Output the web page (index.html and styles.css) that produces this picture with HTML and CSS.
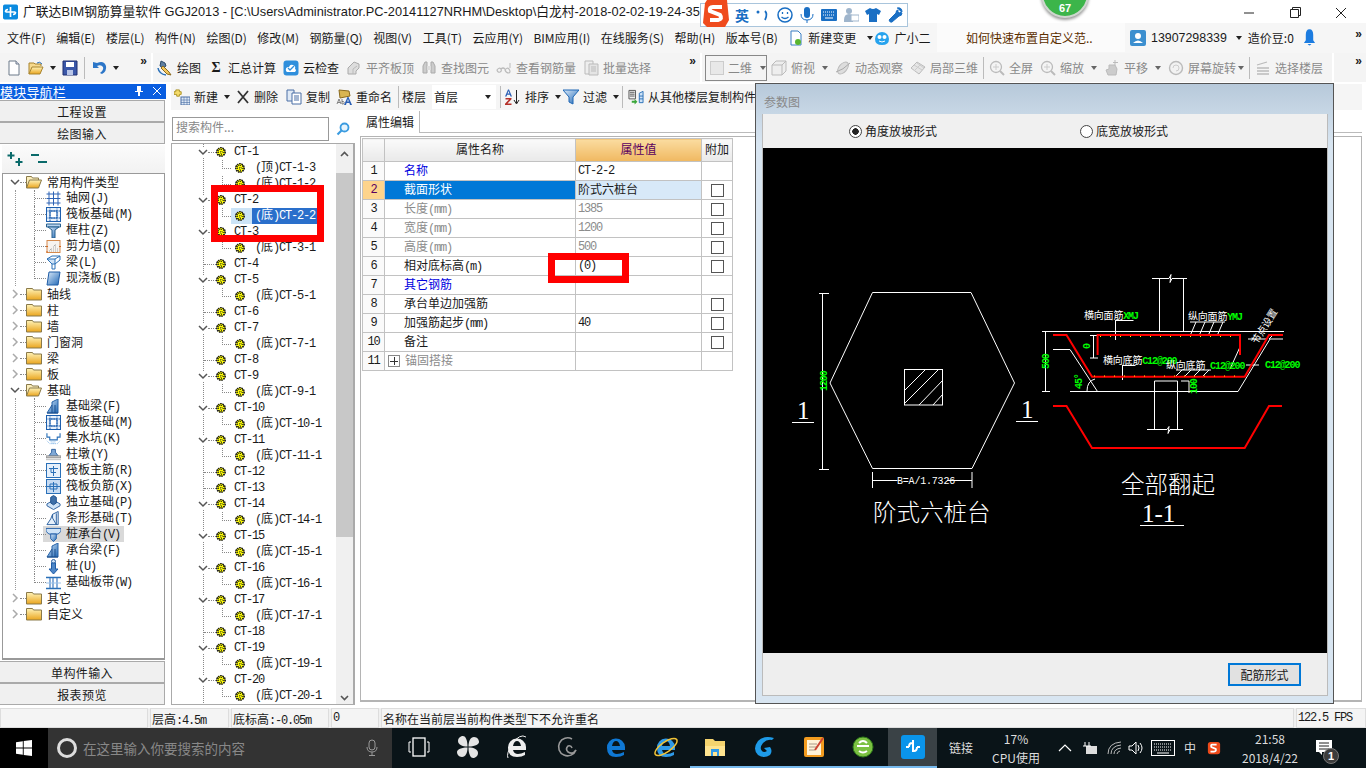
FILE: index.html
```html
<!DOCTYPE html>
<html lang="zh">
<head>
<meta charset="utf-8">
<title>广联达BIM钢筋算量软件 GGJ2013</title>
<link rel="stylesheet" href="styles.css">
</head>
<body>
<svg class="defs" aria-hidden="true">
<defs>
<linearGradient id="fy" x1="0" y1="0" x2="0" y2="1"><stop offset="0" stop-color="#fff3b8"/><stop offset="1" stop-color="#eaa51e"/></linearGradient>
<linearGradient id="bl" x1="0" y1="0" x2="1" y2="1"><stop offset="0" stop-color="#dcebfa"/><stop offset="1" stop-color="#1f67b5"/></linearGradient>
<symbol id="ct" viewBox="0 0 10 10"><circle cx="5" cy="5" r="4.200" fill="#ff0" stroke="#111" stroke-width="1.500" stroke-dasharray="1.500 .8"/><path d="M5 0v10M0 5h10M2.500 1v8M7.500 1v8M1 2.500h8M1 7.500h8" stroke="#222" stroke-width=".8" stroke-dasharray="1 1"/></symbol>
<symbol id="fc" viewBox="0 0 16 14"><path d="M.5 3V1.500h6l1 1.500h8v10H.5z" fill="url(#fy)" stroke="#8a7a4a"/></symbol>
<symbol id="fo" viewBox="0 0 16 14"><path d="M.5 13V1.500h5l1 1.500h6v2" fill="#fbeebc" stroke="#8a7a4a"/><path d="M.5 13l3-8h12l-3 8z" fill="url(#fy)" stroke="#8a7a4a"/></symbol>
<symbol id="grid" viewBox="0 0 15 15"><path d="M3 .5v14M7.500.5v14M12 .5v14M.5 3h14M.5 7.500h14M.5 12h14" stroke="#2d62b5" fill="none"/></symbol>
<symbol id="raft" viewBox="0 0 15 15"><rect x=".5" y=".5" width="14" height="14" fill="#e8f1fb" stroke="#1d5fae"/><rect x="4" y="4" width="7" height="7" fill="#fff" stroke="#1d5fae"/><path d="M0 4h15M0 11h15M4 0v15M11 0v15" stroke="#1d5fae" stroke-dasharray="1.500 1"/></symbol>
<symbol id="col" viewBox="0 0 15 15"><path d="M.5 1h14v3h-14z" fill="#b6d2ee" stroke="#27618f"/><path d="M2 4l4 3v8h3V7l4-3z" fill="url(#bl)" stroke="#27618f"/></symbol>
<symbol id="wall" viewBox="0 0 15 15"><rect x="1" y="1.500" width="13" height="12" fill="#f7f3ef" stroke="#d58a4e"/><path d="M3 12h9M5 10h7M7 8h4M9 6h2M4 10.500h1M8 6.500h1" stroke="#aaa" stroke-dasharray="1 1"/><path d="M0 7.500h2M13 7.500h2M0 13h2" stroke="#d2691e"/></symbol>
<symbol id="beam" viewBox="0 0 15 15"><path d="M1 4l5 5h3V4z" fill="#cfe3f7" stroke="#2a70b8"/><path d="M6 9v5h3V9M9 4l5-3v4l-5 4M1 4l5-3h8" fill="none" stroke="#2a70b8"/></symbol>
<symbol id="slab" viewBox="0 0 15 15"><path d="M3 1h11l-2 13H1z" fill="url(#bl)" stroke="#1f5ca6"/></symbol>
<symbol id="fb" viewBox="0 0 15 15"><path d="M1 14l5-8V3l6-3v14z" fill="url(#bl)" stroke="#2663a8"/><path d="M6 14V6M1 14h11M9 14V6" stroke="#1d4f8c" fill="none"/></symbol>
<symbol id="pit" viewBox="0 0 16 15"><path d="M1 2v4h3v3h8V6h3V2" fill="none" stroke="#2a70b8" stroke-width="1.200"/><path d="M1 10l3 3h8l3-3" fill="none" stroke="#7db3e6" stroke-dasharray="1 1"/><path d="M5 11h6M6 12.500h4" stroke="#7db3e6" stroke-dasharray="1 1"/></symbol>
<symbol id="pier" viewBox="0 0 16 15"><path d="M6 5V2h4v3l3 4H3z" fill="#7fa8d6" stroke="#2b5f9e"/><rect x="0" y="9" width="16" height="2" fill="#ddd" stroke="#888"/><path d="M0 13h16" stroke="#bbb"/></symbol>
<symbol id="pm" viewBox="0 0 15 15"><rect x=".5" y=".5" width="14" height="14" fill="#e6f0fb" stroke="#2a70b8"/><path d="M3 5.500h9M7.500 3v10M5 5.500v4h5" stroke="#2a70b8" fill="none"/></symbol>
<symbol id="pn" viewBox="0 0 15 15"><rect x=".5" y=".5" width="14" height="14" fill="#c8dcf3" stroke="#2a70b8"/><path d="M1 7.500h13M7.500 3v10M4 5h7v5H4z" stroke="#2a70b8" fill="none"/></symbol>
<symbol id="iso" viewBox="0 0 16 15"><path d="M1 9l7-4 7 4v2l-7 4-7-4z" fill="#cfe3f7" stroke="#2a5f9e"/><path d="M5 8V2l3-2 3 2v6l-3 2z" fill="#3d6fa8" stroke="#1d4f8c"/></symbol>
<symbol id="strip" viewBox="0 0 16 15"><path d="M1 14l4-6 2-5 6-3v14z" fill="#e6f0fb" stroke="#2a5f9e"/><path d="M7 3v4l4 7M11 2v12" stroke="#2a5f9e" fill="none"/></symbol>
<symbol id="cap" viewBox="0 0 16 15"><path d="M0 1h16v3l-3 3H3L0 4z" fill="#cfe3f7" stroke="#1f5ca6"/><path d="M5 7h6v5l-3 3-3-3z" fill="url(#bl)" stroke="#1f5ca6"/></symbol>
<symbol id="pile" viewBox="0 0 15 15"><circle cx="7.500" cy="2.500" r="2" fill="#cfe3f7" stroke="#2a5f9e"/><path d="M5.500 4h4v6h2.500l-4.500 5L3 10h2.500z" fill="#4d86c7" stroke="#1f5ca6"/></symbol>
<symbol id="band" viewBox="0 0 15 15"><path d="M0 2.500h15M0 13.500h15" stroke="#2a70b8" stroke-width="1.400"/><path d="M4 3v10M7 3v10M11 3v10" stroke="#4d86c7" stroke-width="1.300"/><path d="M0 8h15" stroke="#9cc3ea"/></symbol>
<symbol id="doc" viewBox="0 0 16 16"><path d="M3 1h7l3 3v11H3z" fill="#fff" stroke="#6c7a8a"/><path d="M10 1v3h3" fill="#dde" stroke="#6c7a8a"/></symbol>
<symbol id="open" viewBox="0 0 16 16"><path d="M1 14V3h5l1 1h6v2" fill="#f6d98d" stroke="#a8842f"/><path d="M1 14l3-7h11l-3 7z" fill="url(#fy)" stroke="#a8842f"/><path d="M9 3q3-2 5 1" fill="none" stroke="#2a70b8"/></symbol>
<symbol id="save" viewBox="0 0 16 16"><path d="M1 1h14v14H1z" fill="#3a57a8" stroke="#1f2f70"/><rect x="4" y="2" width="8" height="5" fill="#fff"/><rect x="5" y="10" width="6" height="5" fill="#b9c6e8"/></symbol>
<symbol id="undo" viewBox="0 0 16 16"><path d="M2 2v6h6L6 6q4-2 6 1 1 3-3 6l2 1q5-3 4-8-2-6-9-3z" fill="#2c76c8"/></symbol>
<symbol id="draw" viewBox="0 0 16 16"><path d="M4 1l4 2 1 3-3 2-3-2z" fill="#5f7f9f" stroke="#2c4a6a"/><path d="M6 6l6 6 2 3-4-1-6-6z" fill="#f3c65a" stroke="#8a6a1f"/><path d="M1 8q1 6 8 7" fill="none" stroke="#2a70b8" stroke-width="1.500"/></symbol>
<symbol id="cloud" viewBox="0 0 16 16"><rect x=".5" y=".5" width="15" height="15" rx="3" fill="#2f8fdc"/><path d="M3 11q-1-4 3-4 1-3 4-2 3 1 2 4 2 1 0 3H4z" fill="#fff"/><path d="M5 8l2 2 4-4" stroke="#2f8fdc" fill="none" stroke-width="1.300"/></symbol>
<symbol id="flat" viewBox="0 0 16 16"><path d="M2 14V8l6-6 5 2v4l-3 3v3z" fill="#ddd" stroke="#aaa"/><path d="M7 14V9l4-3" fill="none" stroke="#bbb"/></symbol>
<symbol id="bino" viewBox="0 0 16 16"><path d="M2 13V6l2-4h2v11zM14 13V6l-2-4h-2v11z" fill="#ccc" stroke="#aaa"/><path d="M6 6h4v4H6z" fill="#ddd"/></symbol>
<symbol id="view" viewBox="0 0 16 16"><path d="M1 10q2-3 4-1 1 2-1 3-2 1-3-2zM9 10q2-3 4-1 2 3 0 4-3 0-4-3zM5 9q2-2 4 0" fill="none" stroke="#bbb" stroke-width="1.200"/><path d="M14 3v5" stroke="#bbb"/></symbol>
<symbol id="batch" viewBox="0 0 16 16"><path d="M2 1h8v13H2z" fill="#eee" stroke="#bbb"/><path d="M6 4h9v11H6z" fill="#e4e4e4" stroke="#bbb"/><path d="M8 7h5M8 9h5M8 11h5" stroke="#bbb"/></symbol>
<symbol id="cube" viewBox="0 0 16 16"><path d="M1 5l4-4h10v10l-4 4H1z" fill="#eee" stroke="#bbb"/><path d="M1 5h10v10M11 5l4-4" fill="none" stroke="#bbb"/></symbol>
<symbol id="orbit" viewBox="0 0 16 16"><ellipse cx="8" cy="8" rx="4" ry="7" fill="#ddd" stroke="#bbb" transform="rotate(40 8 8)"/><path d="M1 12Q8 10 15 3" stroke="#aaa" fill="none"/></symbol>
<symbol id="part" viewBox="0 0 16 16"><path d="M1 8l6-6 8 5-6 7z" fill="#e6e6e6" stroke="#bbb"/><path d="M4 5l8 5M7 3l7 5M4 11l6-6" stroke="#ccc"/></symbol>
<symbol id="zoom" viewBox="0 0 16 16"><circle cx="7" cy="7" r="5.500" fill="#f4f4f4" stroke="#bbb" stroke-width="1.300"/><path d="M11 11l4 4" stroke="#bbb" stroke-width="2"/><path d="M7 4v6M4 7h6" stroke="#ccc"/></symbol>
<symbol id="pan" viewBox="0 0 16 16"><path d="M4 15l-2-5 3-1V5h6l2 4-1 6z" fill="#ccc" stroke="#bbb"/><path d="M11 0v5M9 2.500h5" stroke="#bbb"/></symbol>
<symbol id="rot" viewBox="0 0 16 16"><circle cx="8" cy="8" r="6.500" fill="#f2f2f2" stroke="#bbb" stroke-width="1.400"/><path d="M5 8a3 3 0 1 1 3 3" fill="none" stroke="#ccc"/></symbol>
<symbol id="lev" viewBox="0 0 16 16"><path d="M2 5l10-3M2 8h12M2 11h12M2 14h12" stroke="#bbb" stroke-width="1.300"/></symbol>
<symbol id="newc" viewBox="0 0 16 16"><path d="M2 1h4v2h2v3H6v2H3V6H0V3h2z" fill="#f5dc6b" stroke="#a98f20" transform="scale(.9)"/><rect x="7" y="8" width="9" height="8" fill="#dfe9f5" stroke="#4a6fa5"/><path d="M7 11h9M7 13.500h9M10 8v8M13 8v8" stroke="#4a6fa5" stroke-width=".6"/></symbol>
<symbol id="copy" viewBox="0 0 16 16"><path d="M1 1h7v11H1z" fill="#dfe9f5" stroke="#4a6fa5"/><path d="M6 4h9v11H6z" fill="#fff" stroke="#4a6fa5"/><path d="M8 7h5M8 9h5M8 11h5" stroke="#4a6fa5"/></symbol>
<symbol id="rename" viewBox="0 0 16 16"><path d="M3 1l10 1 1 5-10 2z" fill="#d9b552" stroke="#8a6a1f"/><path d="M1 15l2-5 2 5M1.800 13.500h2.400M6 10v5h1.500q1.500-1.300 0-2.500H6" fill="none" stroke="#666" stroke-width=".8"/><path d="M8 16l3.500-8h1L16 16h-2l-.6-2h-2.800l-.6 2zM11.200 12.500h1.600L12 10z" fill="#2a5fb5" fill-rule="evenodd"/></symbol>
<symbol id="az" viewBox="0 0 16 16"><path d="M0 7.500L3 .5h1l3 7H5.500l-.6-1.700H2.100L1.500 7.500zM2.600 4.500h1.800L3.500 2z" fill="#2a5fb5" fill-rule="evenodd"/><path d="M.5 9h6v1.200L2.500 14.500h4V16h-6.500v-1.200L4 10.500H.5z" fill="#b5302a"/><path d="M11.500 1v13M9 11l2.500 4 2.500-4" fill="none" stroke="#222"/></symbol>
<symbol id="filter" viewBox="0 0 16 16"><path d="M0 1h16L10 8v7L6 13V8z" fill="url(#bl)" stroke="#1f67b5"/></symbol>
<symbol id="fcopy" viewBox="0 0 17 16"><path d="M1 1h7v9H1z" fill="#eee" stroke="#555"/><path d="M2 3h5M2 5h5M2 7h5" stroke="#555"/><path d="M4 12h3v-2l3 3-3 3v-2H4z" fill="#3aa63a"/><path d="M12 4l4-2v12h-4z" fill="#cfe3f7" stroke="#2a70b8"/><path d="M12 7h4M12 10h4" stroke="#2a70b8"/></symbol>
<symbol id="ee" viewBox="0 0 24 24"><path fill-rule="evenodd" d="M3 13a9 9 0 0 1 18-1v3H8q1 4 5 4 3 0 7-2v3q-3 2-8 2-9 0-9-9zM8 11h8q-1-5-4-5t-4 5z"/></symbol>
</defs>
</svg>

<header class="titlebar">
  <svg class="applogo" viewBox="0 0 18 18"><rect width="18" height="18" rx="2" fill="#0b8be0"/><path d="M9 3v12M3 9h12M3 9q0-3 3-3M15 9q0 3-3 3" stroke="#fff" stroke-width="2" fill="none"/></svg>
  <span class="titletext">广联达BIM钢筋算量软件 GGJ2013 - [C:\Users\Administrator.PC-20141127NRHM\Desktop\白龙村-2018-02-02-19-24-35</span>
  <div class="winbtns">
    <svg class="winbtn" viewBox="0 0 46 23"><path d="M18 13h10" stroke="#222"/></svg>
    <svg class="winbtn" viewBox="0 0 46 23"><path d="M18.500 9.500h8v8h-8zM20.500 9.500v-2h8v8h-2" fill="none" stroke="#222"/></svg>
    <svg class="winbtn" viewBox="0 0 46 23"><path d="M18 8l10 10M28 8L18 18" stroke="#222"/></svg>
  </div>
</header>

<nav class="menubar">
  <div class="menus">
    <span>文件(F)</span><span>编辑(E)</span><span>楼层(L)</span><span>构件(N)</span><span>绘图(D)</span><span>修改(M)</span><span>钢筋量(Q)</span><span>视图(V)</span><span>工具(T)</span><span>云应用(Y)</span><span>BIM应用(I)</span><span>在线服务(S)</span><span>帮助(H)</span><span>版本号(B)</span>
    <span class="tool"><svg class="i" viewBox="0 0 16 16"><path d="M3 1h7l3 3v11H3z" fill="#fff" stroke="#3a7fc4"/><circle cx="10" cy="12" r="3" fill="#5ab52e"/></svg>新建变更</span><i class="arr mnarr"></i>
    <span class="tool mnnext"><svg class="i" viewBox="0 0 16 16"><path d="M1 9a7 7 0 0 1 14 0q0 6-7 6T1 9z" fill="#27a3ee"/><circle cx="5.500" cy="7" r="2" fill="#fff"/><circle cx="10.500" cy="7" r="2" fill="#fff"/><path d="M5 11q3 2 6 0" stroke="#fff" fill="none"/></svg>广小二</span>
  </div>
  <div class="newstab">如何快速布置自定义范..</div>
  <div class="account">
    <svg class="i" viewBox="0 0 16 16"><rect width="16" height="16" rx="2" fill="#3c8fcf"/><circle cx="8" cy="6" r="3" fill="#fff"/><path d="M3 13q5-5 10 0z" fill="#fff"/></svg>
    <span class="tel">13907298339</span><i class="arr"></i><span>造价豆:0</span>
    <svg class="bell" viewBox="0 0 14 20"><path d="M7 1q4 0 4 6v6l2 3H1l2-3V7q0-6 4-6z" fill="#1c7ce0"/><path d="M5 17h4q-2 3-4 0z" fill="#1c7ce0"/></svg>
    <b class="more">»</b>
  </div>
</nav>

<div class="toolbar">
  <div class="seg s1">
    <svg class="i"><use href="#doc"/></svg><svg class="i"><use href="#open"/></svg><i class="arr"></i><svg class="i"><use href="#save"/></svg><i class="sep"></i><svg class="i"><use href="#undo"/></svg><i class="arr"></i><b class="more">»</b>
  </div>
  <div class="seg s2">
    <span class="tool"><svg class="i"><use href="#draw"/></svg>绘图</span>
    <span class="tool"><b class="sigma">Σ</b>汇总计算</span>
    <span class="tool"><svg class="i"><use href="#cloud"/></svg>云检查</span>
    <span class="tool off"><svg class="i"><use href="#flat"/></svg>平齐板顶</span>
    <span class="tool off"><svg class="i"><use href="#bino"/></svg>查找图元</span>
    <span class="tool off"><svg class="i"><use href="#view"/></svg>查看钢筋量</span>
    <span class="tool off"><svg class="i"><use href="#batch"/></svg>批量选择</span>
    <b class="more">»</b>
  </div>
  <div class="seg s3">
    <span class="dimbox"><i class="sq"></i>二维<i class="arr"></i></span>
    <span class="tool off"><svg class="i"><use href="#cube"/></svg>俯视</span><i class="arr g"></i>
    <span class="tool off"><svg class="i"><use href="#orbit"/></svg>动态观察</span>
    <span class="tool off"><svg class="i"><use href="#part"/></svg>局部三维</span>
    <i class="sep tight"></i>
    <span class="tool off"><svg class="i"><use href="#zoom"/></svg>全屏</span>
    <span class="tool off"><svg class="i"><use href="#zoom"/></svg>缩放</span><i class="arr g"></i>
    <span class="tool off"><svg class="i"><use href="#pan"/></svg>平移</span><i class="arr g"></i>
    <span class="tool off"><svg class="i"><use href="#rot"/></svg>屏幕旋转</span><i class="arr g near"></i>
    <i class="sep tight"></i>
    <span class="tool off"><svg class="i"><use href="#lev"/></svg>选择楼层</span>
  </div>
  <div class="seg s4"><b class="more">»</b></div>
</div>

<main class="body">
  <aside class="nav">
    <div class="navhead"><span>模块导航栏</span><span class="navctl">
      <svg class="navico" viewBox="0 0 10 12"><path d="M3 1h4v5h2v1H6v4H4V7H1V6h2z" fill="#fff"/></svg>
      <svg class="navico" viewBox="0 0 10 12"><path d="M1 2l8 8M9 2l-8 8" stroke="#fff"/></svg></span></div>
    <div class="navbtn">工程设置</div>
    <div class="navbtn">绘图输入</div>
    <div class="expbar">
      <svg class="expico" viewBox="0 0 18 16"><path d="M4 1v7M.5 4.500h7M12 7v8M8.500 11h7" stroke="#0a6a6a" stroke-width="2"/></svg>
      <svg class="expico" viewBox="0 0 18 16"><path d="M1 4h8M8 11h9" stroke="#0a6a6a" stroke-width="2"/></svg>
    </div>
    <div class="navtree t">
      <div class="fr"><svg class="chev"><path d="M1 3l4 4 4-4" /></svg><i class="dash"></i><svg class="fold"><use href="#fo"/></svg><span><i>常用构件类型</i></span></div>
      <div class="kids">
        <div class="kr"><i class="elbow"></i><svg class="ki"><use href="#grid"/></svg><span><i>轴网</i>(J)</span></div>
        <div class="kr"><i class="elbow"></i><svg class="ki"><use href="#raft"/></svg><span><i>筏板基础</i>(M)</span></div>
        <div class="kr"><i class="elbow"></i><svg class="ki"><use href="#col"/></svg><span><i>框柱</i>(Z)</span></div>
        <div class="kr"><i class="elbow"></i><svg class="ki"><use href="#wall"/></svg><span><i>剪力墙</i>(Q)</span></div>
        <div class="kr"><i class="elbow"></i><svg class="ki"><use href="#beam"/></svg><span><i>梁</i>(L)</span></div>
        <div class="kr last"><i class="elbow"></i><svg class="ki"><use href="#slab"/></svg><span><i>现浇板</i>(B)</span></div>
      </div>
      <div class="fr"><svg class="chev closed"><path d="M3 1l4 4-4 4"/></svg><i class="dash"></i><svg class="fold"><use href="#fc"/></svg><span><i>轴线</i></span></div>
      <div class="fr"><svg class="chev closed"><path d="M3 1l4 4-4 4"/></svg><i class="dash"></i><svg class="fold"><use href="#fc"/></svg><span><i>柱</i></span></div>
      <div class="fr"><svg class="chev closed"><path d="M3 1l4 4-4 4"/></svg><i class="dash"></i><svg class="fold"><use href="#fc"/></svg><span><i>墙</i></span></div>
      <div class="fr"><svg class="chev closed"><path d="M3 1l4 4-4 4"/></svg><i class="dash"></i><svg class="fold"><use href="#fc"/></svg><span><i>门窗洞</i></span></div>
      <div class="fr"><svg class="chev closed"><path d="M3 1l4 4-4 4"/></svg><i class="dash"></i><svg class="fold"><use href="#fc"/></svg><span><i>梁</i></span></div>
      <div class="fr"><svg class="chev closed"><path d="M3 1l4 4-4 4"/></svg><i class="dash"></i><svg class="fold"><use href="#fc"/></svg><span><i>板</i></span></div>
      <div class="fr"><svg class="chev"><path d="M1 3l4 4 4-4"/></svg><i class="dash"></i><svg class="fold"><use href="#fo"/></svg><span><i>基础</i></span></div>
      <div class="kids">
        <div class="kr"><i class="elbow"></i><svg class="ki"><use href="#fb"/></svg><span><i>基础梁</i>(F)</span></div>
        <div class="kr"><i class="elbow"></i><svg class="ki"><use href="#raft"/></svg><span><i>筏板基础</i>(M)</span></div>
        <div class="kr"><i class="elbow"></i><svg class="ki"><use href="#pit"/></svg><span><i>集水坑</i>(K)</span></div>
        <div class="kr"><i class="elbow"></i><svg class="ki"><use href="#pier"/></svg><span><i>柱墩</i>(Y)</span></div>
        <div class="kr"><i class="elbow"></i><svg class="ki"><use href="#pm"/></svg><span><i>筏板主筋</i>(R)</span></div>
        <div class="kr"><i class="elbow"></i><svg class="ki"><use href="#pn"/></svg><span><i>筏板负筋</i>(X)</span></div>
        <div class="kr"><i class="elbow"></i><svg class="ki"><use href="#iso"/></svg><span><i>独立基础</i>(P)</span></div>
        <div class="kr"><i class="elbow"></i><svg class="ki"><use href="#strip"/></svg><span><i>条形基础</i>(T)</span></div>
        <div class="kr hot"><i class="elbow"></i><svg class="ki"><use href="#cap"/></svg><span><i>桩承台</i>(V)</span></div>
        <div class="kr"><i class="elbow"></i><svg class="ki"><use href="#fb"/></svg><span><i>承台梁</i>(F)</span></div>
        <div class="kr"><i class="elbow"></i><svg class="ki"><use href="#pile"/></svg><span><i>桩</i>(U)</span></div>
        <div class="kr last"><i class="elbow"></i><svg class="ki"><use href="#band"/></svg><span><i>基础板带</i>(W)</span></div>
      </div>
      <div class="fr"><svg class="chev closed"><path d="M3 1l4 4-4 4"/></svg><i class="dash"></i><svg class="fold"><use href="#fc"/></svg><span><i>其它</i></span></div>
      <div class="fr"><svg class="chev closed"><path d="M3 1l4 4-4 4"/></svg><i class="dash"></i><svg class="fold"><use href="#fc"/></svg><span><i>自定义</i></span></div>
    </div>
    <div class="navbtn">单构件输入</div>
    <div class="navbtn">报表预览</div>
  </aside>

  <section class="work">
    <div class="subbar">
      <span class="tool"><svg class="i"><use href="#newc"/></svg>新建</span><i class="arr"></i>
      <span class="tool"><svg class="i narrow" viewBox="0 0 14 14"><path d="M2 1l10 12M12 1L2 13" stroke="#333" stroke-width="1.800"/></svg>删除</span>
      <span class="tool sbcopy"><svg class="i"><use href="#copy"/></svg>复制</span>
      <span class="tool"><svg class="i"><use href="#rename"/></svg>重命名</span>
      <i class="sep"></i>
      <span class="sbfloor">楼层</span>
      <span class="floor"><span>首层</span><i class="arr"></i></span>
      <i class="sep sbsep"></i>
      <span class="tool sbaz"><svg class="i"><use href="#az"/></svg>排序</span><i class="arr"></i>
      <span class="tool sbfil"><svg class="i"><use href="#filter"/></svg>过滤</span><i class="arr"></i>
      <i class="sep sbsep2"></i>
      <span class="tool sbfc"><svg class="i"><use href="#fcopy"/></svg>从其他楼层复制构件</span>
    </div>
    <div class="panes">
      <div class="treepane">
        <div class="searchrow">
          <span class="search">搜索构件...</span>
          <svg class="lens" viewBox="0 0 14 14"><circle cx="8.500" cy="5.500" r="4" fill="#e6f4fd" stroke="#3a9be0" stroke-width="1.800"/><path d="M5.500 8.500L1.500 12.500" stroke="#3a9be0" stroke-width="2.200"/></svg>
        </div>
        <div class="treebox">
          <div class="ctlist t">
            <div class="cr"><svg class="chev"><path d="M1 3l4 4 4-4"/></svg><i class="dash"></i><svg class="ct"><use href="#ct"/></svg><span>CT-1</span></div>
            <div class="sr"><i class="el"></i><span class="ctw"><svg class="ct"><use href="#ct"/></svg></span><span class="lb">(<i>顶</i>)CT-1-3</span></div>
            <div class="sr"><i class="el"></i><span class="ctw"><svg class="ct"><use href="#ct"/></svg></span><span class="lb">(<i>底</i>)CT-1-2</span></div>
            <div class="cr"><svg class="chev"><path d="M1 3l4 4 4-4"/></svg><i class="dash"></i><svg class="ct"><use href="#ct"/></svg><span>CT-2</span></div>
            <div class="sr sel"><i class="el"></i><span class="ctw"><svg class="ct"><use href="#ct"/></svg></span><span class="lb">(<i>底</i>)CT-2-2</span></div>
            <div class="cr"><svg class="chev"><path d="M1 3l4 4 4-4"/></svg><i class="dash"></i><svg class="ct"><use href="#ct"/></svg><span>CT-3</span></div>
            <div class="sr"><i class="el"></i><span class="ctw"><svg class="ct"><use href="#ct"/></svg></span><span class="lb">(<i>底</i>)CT-3-1</span></div>
            <div class="cr leaf"><i class="dash"></i><svg class="ct"><use href="#ct"/></svg><span>CT-4</span></div>
            <div class="cr"><svg class="chev"><path d="M1 3l4 4 4-4"/></svg><i class="dash"></i><svg class="ct"><use href="#ct"/></svg><span>CT-5</span></div>
            <div class="sr"><i class="el"></i><span class="ctw"><svg class="ct"><use href="#ct"/></svg></span><span class="lb">(<i>底</i>)CT-5-1</span></div>
            <div class="cr leaf"><i class="dash"></i><svg class="ct"><use href="#ct"/></svg><span>CT-6</span></div>
            <div class="cr"><svg class="chev"><path d="M1 3l4 4 4-4"/></svg><i class="dash"></i><svg class="ct"><use href="#ct"/></svg><span>CT-7</span></div>
            <div class="sr"><i class="el"></i><span class="ctw"><svg class="ct"><use href="#ct"/></svg></span><span class="lb">(<i>底</i>)CT-7-1</span></div>
            <div class="cr leaf"><i class="dash"></i><svg class="ct"><use href="#ct"/></svg><span>CT-8</span></div>
            <div class="cr"><svg class="chev"><path d="M1 3l4 4 4-4"/></svg><i class="dash"></i><svg class="ct"><use href="#ct"/></svg><span>CT-9</span></div>
            <div class="sr"><i class="el"></i><span class="ctw"><svg class="ct"><use href="#ct"/></svg></span><span class="lb">(<i>底</i>)CT-9-1</span></div>
            <div class="cr"><svg class="chev"><path d="M1 3l4 4 4-4"/></svg><i class="dash"></i><svg class="ct"><use href="#ct"/></svg><span>CT-10</span></div>
            <div class="sr"><i class="el"></i><span class="ctw"><svg class="ct"><use href="#ct"/></svg></span><span class="lb">(<i>底</i>)CT-10-1</span></div>
            <div class="cr"><svg class="chev"><path d="M1 3l4 4 4-4"/></svg><i class="dash"></i><svg class="ct"><use href="#ct"/></svg><span>CT-11</span></div>
            <div class="sr"><i class="el"></i><span class="ctw"><svg class="ct"><use href="#ct"/></svg></span><span class="lb">(<i>底</i>)CT-11-1</span></div>
            <div class="cr leaf"><i class="dash"></i><svg class="ct"><use href="#ct"/></svg><span>CT-12</span></div>
            <div class="cr leaf"><i class="dash"></i><svg class="ct"><use href="#ct"/></svg><span>CT-13</span></div>
            <div class="cr"><svg class="chev"><path d="M1 3l4 4 4-4"/></svg><i class="dash"></i><svg class="ct"><use href="#ct"/></svg><span>CT-14</span></div>
            <div class="sr"><i class="el"></i><span class="ctw"><svg class="ct"><use href="#ct"/></svg></span><span class="lb">(<i>底</i>)CT-14-1</span></div>
            <div class="cr"><svg class="chev"><path d="M1 3l4 4 4-4"/></svg><i class="dash"></i><svg class="ct"><use href="#ct"/></svg><span>CT-15</span></div>
            <div class="sr"><i class="el"></i><span class="ctw"><svg class="ct"><use href="#ct"/></svg></span><span class="lb">(<i>底</i>)CT-15-1</span></div>
            <div class="cr"><svg class="chev"><path d="M1 3l4 4 4-4"/></svg><i class="dash"></i><svg class="ct"><use href="#ct"/></svg><span>CT-16</span></div>
            <div class="sr"><i class="el"></i><span class="ctw"><svg class="ct"><use href="#ct"/></svg></span><span class="lb">(<i>底</i>)CT-16-1</span></div>
            <div class="cr"><svg class="chev"><path d="M1 3l4 4 4-4"/></svg><i class="dash"></i><svg class="ct"><use href="#ct"/></svg><span>CT-17</span></div>
            <div class="sr"><i class="el"></i><span class="ctw"><svg class="ct"><use href="#ct"/></svg></span><span class="lb">(<i>底</i>)CT-17-1</span></div>
            <div class="cr leaf"><i class="dash"></i><svg class="ct"><use href="#ct"/></svg><span>CT-18</span></div>
            <div class="cr"><svg class="chev"><path d="M1 3l4 4 4-4"/></svg><i class="dash"></i><svg class="ct"><use href="#ct"/></svg><span>CT-19</span></div>
            <div class="sr"><i class="el"></i><span class="ctw"><svg class="ct"><use href="#ct"/></svg></span><span class="lb">(<i>底</i>)CT-19-1</span></div>
            <div class="cr"><svg class="chev"><path d="M1 3l4 4 4-4"/></svg><i class="dash"></i><svg class="ct"><use href="#ct"/></svg><span>CT-20</span></div>
            <div class="sr"><i class="el"></i><span class="ctw"><svg class="ct"><use href="#ct"/></svg></span><span class="lb">(<i>底</i>)CT-20-1</span></div>
          </div>
          <div class="vscroll">
            <svg class="sa" viewBox="0 0 17 29"><path d="M5 12l3.500-3.500L12 12" fill="none" stroke="#555" stroke-width="1.600"/></svg>
            <div class="thumb"></div>
            <div class="track"><svg class="sa2" viewBox="0 0 17 12"><path d="M5 4l3.500 3.500L12 4" fill="none" stroke="#555" stroke-width="1.600"/></svg></div>
          </div>
        </div>
      </div>
      <div class="props">
        <div class="tabs"><span class="tab">属性编辑</span></div>
        <div class="tablewrap">
          <table class="ptable t">
            <thead><tr><th class="cn"></th><th class="cname"><i>属性名称</i></th><th class="cval"><i>属性值</i></th><th class="cadd"><i>附加</i></th></tr></thead>
            <tbody>
              <tr><td class="cn">1</td><td class="nm link"><i>名称</i></td><td class="vl">CT-2-2</td><td></td></tr>
              <tr class="cur"><td class="cn">2</td><td class="nm"><i>截面形状</i></td><td class="vl"><i>阶式六桩台</i></td><td class="ck"><span class="box"></span></td></tr>
              <tr class="dim"><td class="cn">3</td><td class="nm"><i>长度</i>(mm)</td><td class="vl">1385</td><td class="ck"><span class="box"></span></td></tr>
              <tr class="dim"><td class="cn">4</td><td class="nm"><i>宽度</i>(mm)</td><td class="vl">1200</td><td class="ck"><span class="box"></span></td></tr>
              <tr class="dim"><td class="cn">5</td><td class="nm"><i>高度</i>(mm)</td><td class="vl">500</td><td class="ck"><span class="box"></span></td></tr>
              <tr><td class="cn">6</td><td class="nm"><i>相对底标高</i>(m)</td><td class="vl">(0)</td><td class="ck"><span class="box"></span></td></tr>
              <tr><td class="cn">7</td><td class="nm link"><i>其它钢筋</i></td><td class="vl"></td><td></td></tr>
              <tr><td class="cn">8</td><td class="nm"><i>承台单边加强筋</i></td><td class="vl"></td><td class="ck"><span class="box"></span></td></tr>
              <tr><td class="cn">9</td><td class="nm"><i>加强筋起步</i>(mm)</td><td class="vl">40</td><td class="ck"><span class="box"></span></td></tr>
              <tr><td class="cn">10</td><td class="nm"><i>备注</i></td><td class="vl"></td><td class="ck"><span class="box"></span></td></tr>
              <tr class="dim"><td class="cn">11</td><td class="nm plus"><span class="pbox"></span><i>锚固搭接</i></td><td class="vl"></td><td></td></tr>
            </tbody>
          </table>
        </div>
      </div>
    </div>
  </section>

  <div class="redbox rb1"></div>
  <div class="redbox rb2"></div>

  <div class="dialog">
    <div class="dlgtitle">参数图</div>
    <div class="dlgpanel">
      <div class="radios">
        <span class="radio on"><i class="dot"></i>角度放坡形式</span>
        <span class="radio"><i class="dot"></i>底宽放坡形式</span>
      </div>
      <svg class="cad" viewBox="763 148 564 505" xmlns="http://www.w3.org/2000/svg">
        <g fill="none" stroke="#fff">
          <path d="M830 383L872.500 292.500H971L1014.500 383 972 468.500H872.500z"/>
          <rect x="904.500" y="369.500" width="38" height="35.500"/>
          <path d="M904 391l22-22M904 404l35-35M919 405l24-25M933 405l10-11"/>
          <path d="M822.500 293v177M819 293.500h10M819 469.500h10M872.500 472v16M972 472v16M872.500 480.500h25M947 480.500h25"/>
          <path d="M792 422.500h22M1016 421.500h22"/>
          <path d="M1042 331.500h242M1159.500 331V278.500M1183.500 331V278.500M1152 278.500h17l2-4-1 8 2-4h15"/>
          <path d="M1053 349.500h17l27.500 42M1070 391.500h168l32-52.500h13M1042 391.500h8M1045.500 331v60M1093.500 335v23M1090 335.500h8M1090 358h8"/>
          <path d="M1154.500 381v48M1177.500 381v48M1154.500 381h23M1147 429.500h20l2-3-1 7 2-4h13M1181 381h8M1189 381v12"/>
          <path d="M1115.500 320.500h18M1115.500 320v20M1190 322h35M1190 336l6-14M1199 336l6-14M1208 336l6-14M1217 336l6-14"/>
          <path d="M1122.500 365.500h13M1122.500 365v15M1176 370h35M1176 376l6-6M1185 376l6-6M1194 376l6-6M1203 376l6-6M1230 369l10-22M1246 365h13M1248 339h18M1269 339l4-4"/>
          <path d="M1087 391q0-10 8-12"/>
          <path d="M1140 525.500h44"/>
        </g>
        <g fill="none" stroke="#f00" stroke-width="2">
          <path d="M1053 335h13.500L1092 376.700h152.700L1269 335h14"/>
          <path d="M1097.600 355v-20H1240v20"/>
          <path d="M1053 406h13.500L1092 448h152.700L1269 406h13"/>
        </g>
        <path d="M1100 336.500h138M1094 376h148" stroke="#ff0" stroke-dasharray="1 9" fill="none"/>
        <g class="cadsm">
          <text x="1084" y="319">横向面筋<tspan class="gn">XMJ</tspan></text>
          <text x="1188" y="320">纵向面筋<tspan class="gn">YMJ</tspan></text>
          <text x="1103" y="364">横向底筋<tspan class="gn">C12@200</tspan></text>
          <text x="1166" y="369">纵向底筋<tspan class="gn"> C12@200</tspan></text>
          <text class="gn" x="1265" y="368">C12@200</text>
          <text x="897" y="484">B=A/1.7326</text>
          <text transform="translate(1257 345) rotate(-58)">节点设置</text>
          <text class="gn" transform="translate(1049 369) rotate(-90)">500</text>
          <text class="gn" transform="translate(827 391) rotate(-90)">1200</text>
          <text class="gn" transform="translate(1090 349) rotate(-90)">0</text>
          <text class="gn" transform="translate(1197 394) rotate(-90)">100</text>
          <text class="gn" transform="translate(1082 389) rotate(-90)">45°</text>
        </g>
        <g class="cadlg">
          <text x="797" y="419">1</text>
          <text x="1021" y="418">1</text>
          <text class="bigcn" x="873" y="521">阶式六桩台</text>
          <text class="bigcn" x="1121" y="493">全部翻起</text>
          <text x="1142" y="522">1-1</text>
        </g>
      </svg>
      <div class="dlgfoot"><span class="okbtn">配筋形式</span></div>
    </div>
  </div>
</main>

<footer class="status t">
  <span class="sc c1"></span><span class="sc c2"><i>层高</i>:4.5m</span><span class="sc c3"><i>底标高</i>:-0.05m</span><span class="sc c4">0</span><span class="sc c5"><i>名称在当前层当前构件类型下不允许重名</i></span><span class="sc c6">122.5 FPS</span>
</footer>

<div class="taskbar">
  <div class="startbtn"><svg class="winlogo" viewBox="0 0 16 16"><path d="M0 2.200l6.800-1v6.300H0zM7.700 1L16 0v7.500H7.700zM0 8.400h6.800v6.400L0 13.800zM7.700 8.400H16V16l-8.300-1.100z" fill="#fff"/></svg></div>
  <div class="tasksearch">
    <i class="cortana"></i><span class="hint">在这里输入你要搜索的内容</span>
    <svg class="mic" viewBox="0 0 12 18"><rect x="3" y="1" width="6" height="10" rx="3" fill="none" stroke="#999"/><path d="M1 8q0 5 5 5t5-5M6 13v3M3 16.500h6" fill="none" stroke="#999"/></svg>
  </div>
  <div class="taskicons">
    <span class="ti"><svg viewBox="0 0 24 24"><rect x="6" y="3" width="12" height="18" fill="none" stroke="#fff" stroke-width="1.300"/><path d="M4 7H2v10h2M20 7h2v10h-2" fill="none" stroke="#fff"/></svg></span>
    <span class="ti"><svg viewBox="0 0 24 24"><g fill="#e4e4e4"><path d="M11.500 11.500C6 11.500 2 9.500 2 6S5 1 7 1s4.500 3 4.500 10.500z"/><path d="M12.500 11.500C12.500 6 14.500 2 18 2s5 3 5 5-3 4.500-10.500 4.500z"/><path d="M12.500 12.500C18 12.500 22 14.500 22 18s-3 5-5 5-4.500-3-4.500-10.500z"/><path d="M11.500 12.500C11.500 18 9.500 22 6 22s-5-3-5-5 3-4.500 10.500-4.500z"/></g></svg></span>
    <span class="ti"><svg class="ic-w" viewBox="0 0 24 24"><use href="#ee"/><path d="M3 23Q1 19 7 9 15-2 21 2" fill="none" stroke="#eee"/></svg></span>
    <span class="ti"><svg viewBox="0 0 24 24"><path d="M17 4a9 9 0 1 0 4 11q-3 5-8 2-3-3 0-6 3-1 4 2" fill="none" stroke="#999" stroke-width="1.600"/></svg></span>
    <span class="ti"><svg class="ic-e" viewBox="0 0 24 24"><use href="#ee"/></svg></span>
    <span class="ti"><svg class="ic-i" viewBox="0 0 24 24"><use href="#ee"/><ellipse cx="12" cy="12" rx="13" ry="5" fill="none" stroke="#f2c438" stroke-width="1.500" transform="rotate(-35 12 12)"/></svg></span>
    <span class="ti run"><svg viewBox="0 0 24 24"><path d="M2 4h8l2 2h10v15H2z" fill="#f5d46e"/><path d="M2 11h20v10H2z" fill="#ffe48f"/><path d="M8 14h8v7h-2v-4h-4v4H8z" fill="#2f9ae8"/></svg></span>
    <span class="ti run"><svg viewBox="0 0 24 24"><path d="M22 3q-10-3-16 3Q0 14 6 20q6 4 12 0 3-4 0-8l-6 1 3 3q-3 2-5 0-3-3 1-8 4-4 9-3z" fill="#1e9be8"/></svg></span>
    <span class="ti run"><svg viewBox="0 0 24 24"><rect x="2" y="2" width="20" height="20" rx="2" fill="#f39c1f"/><rect x="5" y="5" width="14" height="15" fill="#fff3d8"/><path d="M7 9h8M7 12h8M7 15h6" stroke="#a98" fill="none"/><path d="M21 3L13 15" stroke="#c43" stroke-width="2"/></svg></span>
    <span class="ti run"><svg viewBox="0 0 24 24"><circle cx="12" cy="12" r="10" fill="#7bc142" stroke="#2e7a1a"/><path d="M6 11h12M16 8q-4-4-8 0M8 16q4 3 8 0" stroke="#fff" stroke-width="2" fill="none"/></svg></span>
    <span class="ti active"><svg viewBox="0 0 24 24"><rect width="24" height="24" rx="3" fill="#0a94ea"/><path d="M12 5v12M5 12h3M16 12h3M8 12q0-4 3-4M16 12q0 4-3 4" stroke="#fff" stroke-width="2" fill="none"/></svg></span>
  </div>
  <div class="tray">
    <span class="trlink">链接</span>
    <span class="cpu"><span>17%</span><span>CPU使用</span></span>
    <svg class="tr a" viewBox="0 0 14 14"><path d="M1 10l6-6 6 6" fill="none" stroke="#fff" stroke-width="1.200"/></svg>
    <svg class="tr" viewBox="0 0 16 14"><rect x="4" y="5" width="11" height="8" fill="#ddd"/><path d="M3 1v4M7 1v4M1 5h8" stroke="#fff"/></svg>
    <svg class="tr" viewBox="0 0 16 14"><path d="M1 13q0-11 13-12M4 13q0-8 10-9M7 13q0-5 7-6M10 13q0-2 3-3" fill="none" stroke="#bbb"/></svg>
    <svg class="tr nar" viewBox="0 0 16 14"><path d="M1 5h3l4-4v12L4 9H1z" fill="none" stroke="#fff"/><path d="M10 4q2 3 0 6M12 2q4 5 0 10" fill="none" stroke="#fff"/></svg>
    <svg class="tr kb" viewBox="0 0 24 16"><rect x=".5" y=".5" width="23" height="15" fill="none" stroke="#fff"/><path d="M3 4h18M3 7h18M3 10h18" stroke="#fff" stroke-dasharray="1 1"/><path d="M6 13h12" stroke="#fff"/></svg>
    <span class="zh">中</span>
    <svg class="tr" viewBox="0 0 16 16"><rect x="1" y="1" width="14" height="14" rx="3" fill="#ee4a1a"/><path d="M11 4H6q-2 0-1 3l5 2q1 3-2 3H4" fill="none" stroke="#fff" stroke-width="2"/></svg>
    <span class="clock"><span>21:58</span><span>2018/4/22</span></span>
    <span class="notif"><svg viewBox="0 0 16 16"><path d="M0 0h16v12H6v3l-3-3H0z" fill="#fff"/><path d="M3 3h10M3 6h10M3 9h10" stroke="#222"/></svg><b class="badge">1</b></span>
  </div>
</div>

<div class="ime">
  <svg class="imes" viewBox="0 0 26 28"><path d="M4 0h20l2 20-4 7H4l-4-4L2 3z" fill="#ef4b1d"/><path d="M19 7H10Q6 7 7 11l10 4q3 4-2 5H7" fill="none" stroke="#fff" stroke-width="4"/></svg>
  <b class="imeen">英</b>
  <svg class="ii" viewBox="0 0 16 16"><circle cx="3" cy="5" r="1.500" fill="#1a6fc4"/><path d="M10 4q3 3 0 9" fill="none" stroke="#1a6fc4" stroke-width="1.800"/></svg>
  <svg class="ii" viewBox="0 0 16 16"><circle cx="8" cy="8" r="7" fill="none" stroke="#1a6fc4" stroke-width="1.500"/><path d="M5.500 5v2M10.500 5v2M4.500 10q3.500 3 7 0" stroke="#1a6fc4" fill="none" stroke-width="1.300"/></svg>
  <svg class="ii" viewBox="0 0 16 16"><rect x="5" y="0" width="6" height="11" rx="3" fill="#1a6fc4"/><path d="M2 7q0 6 6 6t6-6M8 13v3" fill="none" stroke="#1a6fc4"/></svg>
  <svg class="ii" viewBox="0 0 16 16"><rect y="2" width="16" height="12" rx="1" fill="#1a6fc4"/><path d="M2 5h12M2 8h12" stroke="#fff" stroke-dasharray="1 1"/><path d="M4 11h8" stroke="#fff"/></svg>
  <svg class="ii" viewBox="0 0 16 16"><circle cx="6" cy="4" r="3" fill="#9fb5cc"/><path d="M1 13q0-6 5-6 3 0 4 2v6H1z" fill="#9fb5cc"/><rect x="8" y="8" width="8" height="6" fill="#fff" stroke="#9fb5cc"/></svg>
  <svg class="ii" viewBox="0 0 16 16"><path d="M5 1L0 4l2 4 2-1v8h8V7l2 1 2-4-5-3q-3 2-6 0z" fill="#1a6fc4"/></svg>
  <svg class="ii" viewBox="0 0 16 16"><path d="M10 1q5-1 5 4l-3 1-1-1V3q-2 0-2 3L2 13q1 3 3 2l7-6q3 0 3-3" fill="#1a6fc4" stroke="#1a6fc4"/></svg>
</div>
<div class="ball"><span>67</span></div>
</body>
</html>
```
FILE: styles.css
```css
*{box-sizing:border-box}
html,body{margin:0;padding:0}
body{width:1366px;height:768px;overflow:hidden;position:relative;display:flex;flex-direction:column;background:#fff;font:12px/16px "Noto Sans CJK SC","Liberation Sans",sans-serif;color:#1a1a1a}
svg{display:block;flex:none}
i{font-style:normal}
.defs{position:absolute;width:0;height:0}
.i{width:16px;height:16px}
.i.narrow{width:14px;height:14px}

.t{font-family:"Liberation Mono","Noto Sans CJK SC",monospace;letter-spacing:-1.2px}
.t i{font-family:"Noto Sans CJK SC",sans-serif;letter-spacing:0}

.titlebar{height:23px;display:flex;align-items:center;flex:none;padding-left:3px}
.applogo{width:15px;height:16px}
.titletext{margin-left:5px;white-space:nowrap;font-family:"Liberation Sans","Noto Sans CJK SC",sans-serif;font-size:12.800px}
.winbtns{margin-left:auto;display:flex;margin-right:2px}
.winbtn{width:46px;height:23px}

.menubar{height:30px;flex:none;display:flex;align-items:center;background:#f6f6f6;padding-bottom:1px}
.menus{display:flex;align-items:center;gap:10.500px;padding-left:7px;width:937px;white-space:nowrap}
.mnarr{margin-left:-2px}
.mnnext{margin-left:-9px}
.newstab{width:188px;height:100%;background:#fbfbfb;color:#5c2f00;padding:7px 0 0 29px}
.account{flex:1;display:flex;align-items:center;padding-left:5px;gap:5px;white-space:nowrap}
.tel{font-family:"Liberation Sans",sans-serif;font-size:12.400px}
.account .arr{margin:0 1px 0 4px}
.bell{width:13px;height:19px;margin-left:4px}
.more{font:700 12px/12px "Liberation Sans",sans-serif;margin-left:auto;margin-right:4px;align-self:flex-start;padding-top:2px}
.account .more{margin-top:-2px}
.arr{display:block;flex:none;width:0;height:0;border:3px solid transparent;border-top:4px solid #222;border-bottom:0;margin:0}
.arr.g{border-top-color:#666}
.near{margin-left:-5px}
.sep{display:block;flex:none;width:1px;height:22px;background:#bbb}
.sep.tight{margin:0 -2px}
.tool{display:flex;align-items:center;gap:4px;white-space:nowrap;flex:none}
.off{color:#8a8a8a}

.toolbar{height:29px;flex:none;display:flex;gap:2px}
.seg{display:flex;align-items:center;gap:7px;background:#f4f4f4}
.s1{width:151px;padding-left:6px;gap:6px}
.s2{width:547px;padding-left:4px}
.s3{width:630px;padding-left:3px}
.s4{flex:1}
.sigma{width:16px;text-align:center;font:700 14px/16px "Liberation Serif",serif}
.dimbox{width:62px;height:26px;border:1px solid #888;display:flex;align-items:center;color:#888;background:#f4f4f4;padding-left:4px;gap:4px;margin-right:-3px}
.dimbox .arr{margin-left:4px;border-top-color:#666}
.sq{width:14px;height:14px;background:#e8e8e8;border:1px solid #ccc}

.body{flex:1;display:flex;position:relative;min-height:0}
.nav{width:166px;flex:none;display:flex;flex-direction:column;padding:2px 0}
.navhead{height:15px;background:#0a5ee0;color:#fff;font-size:13px;line-height:15px;display:flex;justify-content:space-between;letter-spacing:.2px;margin-bottom:1px;flex:none}
.navctl{display:flex;gap:8px;padding:1px 4px 0 0}
.navico{width:10px;height:12px}
.navbtn{height:22px;flex:none;background:#f0f0f0;border:1px solid #aaa;border-width:1px 1px 1px 0;text-align:center;line-height:22px;letter-spacing:.4px;margin-right:1px;font-size:12px}
.expbar{height:28px;flex:none;background:linear-gradient(#fbfbfb,#f2f2f2);display:flex;align-items:center;gap:5px;padding-left:5px;margin:1px 1px 0 2px}
.expico{width:18px;height:16px}
.navtree{flex:1;margin:0 1px 1px 2px;border:1px solid #999;border-bottom-width:2px;overflow:hidden;background:#fff}
.fr{height:16px;display:flex;align-items:center;padding-left:7px}
.fr span{margin-top:2px}
.chev{width:10px;height:10px;fill:none;stroke:#555;stroke-width:1.500;flex:none}
.chev.closed{stroke:#aaa}
.dash{display:block;flex:none;width:6px;border-top:1px dotted #888}
.fold{width:16px;height:14px;margin-right:5px}
.kids{margin-left:12px;border-left:1px dotted #999;padding-left:18px}
.kr{height:16px;display:flex;align-items:center;width:90px;white-space:nowrap}
.elbow{display:block;flex:none;width:12px;height:16px;border-left:1px dotted #888;background:repeating-linear-gradient(90deg,#888 0 1px,transparent 1px 2px) 0 8px/100% 1px no-repeat}
.last .elbow{height:9px;align-self:flex-start}
.ki{width:15px;height:15px;margin-right:5px}
.hot{background:linear-gradient(90deg,transparent 9px,#d9d9d9 9px)}

.work{flex:1;display:flex;flex-direction:column;min-width:0;padding-left:5px;padding-top:2px}
.subbar{height:26px;flex:none;background:#f5f5f5;display:flex;align-items:center;gap:6px;padding-left:3px;overflow:hidden;white-space:nowrap;margin-right:4px}
.sbcopy{margin-left:2px}
.sbfloor{margin-left:-3px}
.sbsep{margin-left:-2px}
.sbaz{margin-left:-2px}
.sbfil{margin-left:-4px}
.sbsep2{margin-left:-3px}
.sbfc{margin-left:-1px}
.floor{width:64px;height:24px;background:#fff;display:flex;align-items:center;justify-content:space-between;padding:0 5px 0 2px}
.panes{flex:1;display:flex;min-height:0;margin-bottom:2px}
.treepane{width:184px;flex:none;display:flex;flex-direction:column;padding-top:6px}
.searchrow{height:26px;flex:none;display:flex;align-items:center;padding-left:1px}
.search{width:157px;height:24px;border:1px solid #999;color:#888;padding:1px 0 0 3px}
.lens{width:14px;height:14px;margin-left:7px}
.treebox{flex:1;min-height:0;display:flex;border:1px solid #aaa;border-right-width:2px;overflow:hidden;margin-top:1px}
.ctlist{flex:1;min-width:0;overflow:hidden;background:repeating-linear-gradient(#888 0 1px,transparent 1px 2px) 31px 0/1px 100% no-repeat}
.cr{height:16px;display:flex;align-items:center;padding-left:26px}
.cr .chev{background:#fff}
.cr .dash{width:8px}
.cr.leaf{padding-left:32px}
.cr.leaf .dash{width:12px}
.ct{width:10px;height:10px}
.cr .ct{margin-right:8px}
.sr{height:16px;display:flex;align-items:center;padding-left:50px;white-space:nowrap}
.el{display:block;flex:none;width:9px;height:9px;align-self:flex-start;border-left:1px dotted #888;border-bottom:1px dotted #888}
.ctw{width:21px;height:16px;display:flex;align-items:center;padding-left:4px}
.lb{padding:0 2px 0 3px;height:16px;line-height:12px}
.sel .ctw{background:#cce4f7}
.sel .lb{background:#2a6fcb;color:#fff}
.vscroll{width:17px;flex:none;display:flex;flex-direction:column;background:#f0f0f0}
.sa{width:17px;height:29px;flex:none}
.thumb{height:364px;flex:none;background:#c8c8c8}
.track{flex:1;display:flex;align-items:flex-end}
.sa2{width:17px;height:12px}

.props{flex:1;min-width:0;display:flex;flex-direction:column;padding:2px 4px 3px 5px}
.tabs{height:21px;flex:none;border-bottom:1px solid #bbb;display:flex;align-items:flex-end}
.tab{width:60px;height:22px;background:#fff;border-right:1px solid #bbb;padding:3px 0 0 6px;margin-bottom:-1px}
.tablewrap{flex:1;margin-top:3px;border:1px solid #b4b4b4;border-bottom-width:2px;padding:1px 0 0 1px;background:#fff}
.ptable{border-collapse:collapse;table-layout:fixed;width:370px;line-height:16px}
.ptable th,.ptable td{border:1px solid #c2c2c2;padding:0;height:19px;overflow:hidden;white-space:nowrap}
.ptable th{height:23px;font-weight:400;background:linear-gradient(#fafafa,#e9e9e9);text-align:center}
.cn{width:22px}
.cname{width:191px}
.cval{width:126px}
.cadd{width:31px}
.ptable th.cval{background:linear-gradient(#fbdca0,#f0b860);color:#5a0060}
.ptable td.cn{text-align:center;background:#fafafa}
.nm{padding-left:19px!important}
.vl{padding-left:2px!important}
.link{color:#0000e0}
.cur .nm{background:#0078d7;color:#fff}
.cur .vl{background:#d8e9f8}
.ptable .cur td.cn{background:#fdd48c;color:#5a0060}
.dim .nm,.dim .vl{color:#8c8c8c}
.ck{text-align:center}
.box{display:block;width:13px;height:13px;border:1px solid #555;margin:0 auto;background:#fff}
.plus{padding-left:3px!important}
.pbox{display:inline-block;vertical-align:-2px;width:12px;height:12px;border:1px solid #888;margin-right:5px;background:linear-gradient(#333,#333) center/8px 1px no-repeat,linear-gradient(#333,#333) center/1px 8px no-repeat}

.redbox{position:absolute;border:7px solid #f00;pointer-events:none}
.rb1{left:211px;top:103px;width:113px;height:57px}
.rb2{left:548px;top:171px;width:81px;height:30px}

.dialog{position:absolute;left:755px;top:1px;width:579px;height:621px;border:1px solid #555;background:linear-gradient(#b7c9da 0,#d8e5f1 60px,#d8e5f1 100%);display:flex;flex-direction:column;padding:0 5px 7px 6px}
.dlgtitle{height:30px;flex:none;color:#888;padding:10px 0 0 2px;line-height:16px}
.dlgpanel{flex:1;display:flex;flex-direction:column;background:#f0f0f0;border:1px solid #bbb;border-top:0;min-height:0}
.radios{height:34px;flex:none;display:flex;align-items:center;padding-left:86px;gap:143px;white-space:nowrap;background:#f0f0f0}
.radio{display:flex;align-items:center;gap:3px}
.dot{display:block;width:13px;height:13px;border:1px solid #444;border-radius:50%;background:#fff}
.on .dot{background:radial-gradient(circle,#222 0 3px,#fff 3.500px)}
.cad{width:564px;height:505px;background:#000;flex:none}
.cadsm text{font:10px "Liberation Mono","Noto Sans CJK SC",monospace;fill:#fff;letter-spacing:-.2px}
.cadsm .gn{fill:#0f0;letter-spacing:-1.100px;font-weight:700}
.cadlg text{font:25px "Liberation Serif","Noto Sans CJK SC",serif;fill:#fff}
.cadlg .bigcn{font:300 23.500px "Noto Sans CJK SC",sans-serif}
.dlgfoot{flex:1;display:flex;align-items:center;justify-content:flex-end;padding-right:26px;background:#eee}
.okbtn{width:73px;height:23px;border:2px solid #0078d7;background:#e1e1e1;text-align:center;line-height:19px}

.status{height:21px;flex:none;display:flex;gap:2px;background:#f0f0f0;line-height:19px;white-space:nowrap;border-top:1px solid #fff}
.sc{border:1px solid #ddd;padding-left:1px;height:20px;background:#f4f4f4}
.c1{width:148px}
.c2{width:79px}
.c3{width:98px}
.c4{width:48px}
.c5{width:913px}
.c6{flex:1}

.taskbar{height:40px;flex:none;background:#0a1418;display:flex;color:#ddd}
.startbtn{width:48px;background:#000;display:flex;align-items:center;justify-content:center}
.winlogo{width:16px;height:16px}
.tasksearch{width:344px;background:#333;display:flex;align-items:center;padding-left:9px;color:#888;font-size:13.500px;white-space:nowrap}
.cortana{display:block;width:20px;height:20px;border-radius:50%;border:3px solid #ddd;margin-right:6px;flex:none}
.hint{flex:1}
.mic{width:12px;height:18px;margin-right:14px}
.taskicons{display:flex;padding-left:2px;width:544px;align-items:stretch}
.ti{width:49.400px;flex:none;display:flex;align-items:center;justify-content:center;border-bottom:2px solid transparent}
.ti svg{width:24px;height:24px}
.ic-w{fill:#eee}
.ic-e{fill:#0f78d4}
.ic-i{fill:#2f9ae8}
.run{border-bottom-color:#76b9ed}
.active{background:#3a4246;border-bottom-color:#76b9ed}
.tray{flex:1;display:flex;align-items:center;margin-left:-8px;font-size:12px}
.trlink{width:24px;margin-left:21px;white-space:nowrap}
.cpu{display:flex;flex-direction:column;align-items:center;width:48px;margin-left:19px;line-height:19px}
.tr{width:16px;height:14px;margin-left:9px}
.tr.a{margin-left:17px}
.tr.nar{margin-left:5px}
.tr.kb{width:24px;height:16px;margin-left:7px}
.zh{margin-left:9px}
.tray>.zh+svg{margin-left:10px}
.clock{display:flex;flex-direction:column;align-items:center;width:70px;margin-left:13px;line-height:19px;white-space:nowrap}
.notif{position:relative;margin-left:11px;width:16px;height:16px}
.notif svg{width:16px;height:16px}
.badge{position:absolute;left:7px;top:8px;width:16px;height:16px;border-radius:50%;background:#3c3c3c;color:#fff;border:1px solid #777;text-align:center;font:700 11px/14px "Liberation Sans",sans-serif}

.ime{position:absolute;left:700px;top:3px;width:208px;height:24px;background:#fff;border:1px solid #a9c5dc;display:flex;align-items:center;gap:6px}
.imes{width:26px;height:28px;margin:-3px 0 0 2px}
.imeen{color:#1a6fc4;font-size:14px;line-height:16px}
.ii{width:16px;height:16px}
.ball{position:absolute;left:1041px;top:-30px;width:48px;height:48px;border-radius:50%;background:#3cb54a;border:2px solid #cfd6cf;box-shadow:0 2px 3px rgba(0,0,0,.4);color:#fff;font:700 11px/16px "Liberation Sans",sans-serif;text-align:center;padding-top:28px}
```
